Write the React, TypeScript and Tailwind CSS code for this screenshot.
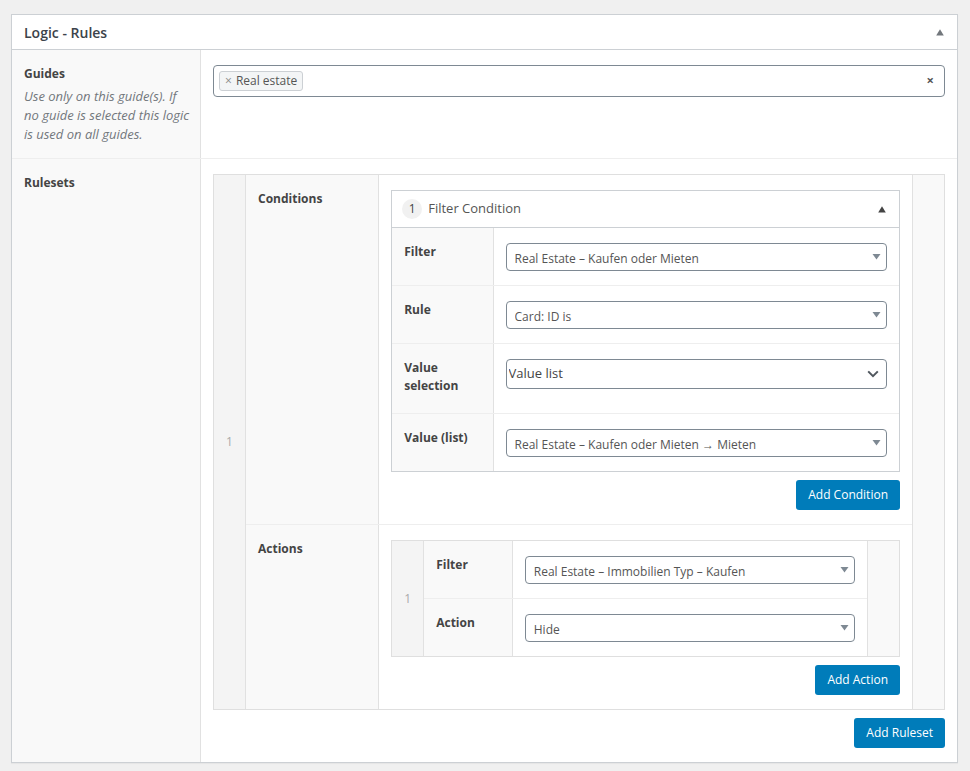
import { useState } from 'react';
import type { ReactNode } from 'react';
import { clsx } from 'clsx';

type FieldProps = {
  label: string;
  htmlFor?: string;
  description?: string;
  children: ReactNode;
};

// One settings row: grey label cell on the left, input cell on the right.
function Field({ label, htmlFor, description, children }: FieldProps) {
  const labelClass = 'mb-1 block text-[12px] leading-[18px] font-bold text-[#444]';
  return (
    <div className="flex border-t border-[#eee] first:border-t-0">
      <div className="w-1/5 shrink-0 border-r border-[#e1e1e1] bg-[#f9f9f9] pt-[15px] pr-2 pb-[14px] pl-3">
        {htmlFor ? (
          <label htmlFor={htmlFor} className={labelClass}>{label}</label>
        ) : (
          <span className={labelClass}>{label}</span>
        )}
        {description && (
          <p className="text-[13px] leading-[19px] text-[#72777c] italic">{description}</p>
        )}
      </div>
      <div className="min-w-0 flex-1 px-3 pt-[15px] pb-[14px]">{children}</div>
    </div>
  );
}

function SearchSelect({ id, value }: { id: string; value: string }) {
  return (
    <div className="relative">
      <select
        id={id}
        className="block h-7 w-full appearance-none rounded border border-[#7e8993] bg-white pt-1 pr-7 pl-2 text-[12px] text-[#555]"
      >
        <option>{value}</option>
      </select>
      <svg className="pointer-events-none absolute top-[11px] right-[6px]" width="9" height="6" viewBox="0 0 9 6">
        <path d="M0.5 0h8L4.5 5.5z" fill="#7e8993" />
      </svg>
    </div>
  );
}

function NativeSelect({ id, value }: { id: string; value: string }) {
  return (
    <div className="relative">
      <select
        id={id}
        className="block h-[30px] w-full appearance-none rounded border border-[#7e8993] bg-white pr-6 pl-[2px] text-[13px] text-[#444]"
      >
        <option>{value}</option>
      </select>
      <svg className="pointer-events-none absolute top-[11px] right-2" width="12" height="8" viewBox="0 0 12 8">
        <path d="M1.2 1.4L6 6.2l4.8-4.8" fill="none" stroke="#50575e" strokeWidth="2" />
      </svg>
    </div>
  );
}

function UpTriangle({ className }: { className?: string }) {
  return (
    <svg width="8" height="7" viewBox="0 0 8 7" className={className}>
      <path d="M4 0.3L7.8 6.5H0.2z" fill="currentColor" />
    </svg>
  );
}

// Table-like box with an order handle on the left and a tools strip on the right.
function RepeaterRow({ order, children }: { order: number; children: ReactNode }) {
  return (
    <div className="flex border border-[#dfdfdf]">
      <div className="flex w-8 shrink-0 items-center justify-center border-r border-[#e1e1e1] bg-[#f4f4f4] text-[12px] text-[#aaa]">
        {order}
      </div>
      <div className="min-w-0 flex-1">{children}</div>
      <div className="w-8 shrink-0 border-l border-[#e1e1e1] bg-[#f9f9f9]" />
    </div>
  );
}

function AddButton({ children }: { children: ReactNode }) {
  return (
    <div className="mt-2 flex justify-end">
      <button
        type="button"
        className="h-[30px] rounded-[3px] bg-[#007cba] px-3 text-[12px] text-white hover:bg-[#0071a1]"
      >
        {children}
      </button>
    </div>
  );
}

function GuidePicker() {
  const [guides, setGuides] = useState(['Real estate']);
  return (
    <div className="flex h-8 items-center rounded border border-[#7e8993] bg-white px-[5px]">
      {guides.map((guide) => (
        <span
          key={guide}
          className="flex h-5 items-center gap-1 rounded-[3px] border border-[#ccd0d4] bg-[#f3f5f6] px-[5px] text-[12px] text-[#555]"
        >
          <button
            type="button"
            aria-label={`Remove ${guide}`}
            className="text-[#888]"
            onClick={() => setGuides(guides.filter((g) => g !== guide))}
          >
            ×
          </button>
          {guide}
        </span>
      ))}
      <input id="guides" type="text" className="h-6 min-w-0 flex-1 px-1 text-[12px] outline-none" />
      <button
        type="button"
        aria-label="Clear guides"
        className="px-[5px] text-[13px] font-bold text-[#555]"
        onClick={() => setGuides([])}
      >
        ×
      </button>
    </div>
  );
}

function FilterCondition() {
  const [open, setOpen] = useState(true);
  return (
    <div className="border border-[#ccd0d4]">
      <div className={clsx('flex h-[37px] items-center pr-[13px] pl-[10px]', open && 'border-b border-[#ccd0d4]')}>
        <span className="flex size-5 items-center justify-center rounded-full bg-[#f1f1f1] text-[12px] text-[#444]">
          1
        </span>
        <span className="ml-[6px] flex-1 text-[13px] text-[#555]">Filter Condition</span>
        <button type="button" aria-label="Toggle condition" onClick={() => setOpen(!open)}>
          <UpTriangle className="text-[#444]" />
        </button>
      </div>
      {open && (
        <div>
          <Field label="Filter" htmlFor="condition-filter">
            <SearchSelect id="condition-filter" value="Real Estate – Kaufen oder Mieten" />
          </Field>
          <Field label="Rule" htmlFor="condition-rule">
            <SearchSelect id="condition-rule" value="Card: ID is" />
          </Field>
          <Field label="Value selection" htmlFor="condition-selection">
            <NativeSelect id="condition-selection" value="Value list" />
          </Field>
          <Field label="Value (list)" htmlFor="condition-value">
            <SearchSelect id="condition-value" value="Real Estate – Kaufen oder Mieten → Mieten" />
          </Field>
        </div>
      )}
    </div>
  );
}

export default function App() {
  const [open, setOpen] = useState(true);
  return (
    <main className="min-h-screen bg-[#f0f0f0] pt-[14px] pr-3 pl-[11px] font-['Open_Sans','Noto_Sans',sans-serif]">
      <section className="border border-[#ccd0d4] bg-white shadow-[0_1px_1px_rgba(0,0,0,0.04)]">
        <header className="flex h-[35px] items-center justify-between border-b border-[#ccd0d4] pr-[13px] pl-3">
          <h2 className="text-[14px] font-semibold text-[#3c434a]">Logic - Rules</h2>
          <button type="button" aria-label="Toggle panel" onClick={() => setOpen(!open)}>
            <UpTriangle className="text-[#72777c]" />
          </button>
        </header>
        {open && (
          <div>
            <Field
              label="Guides"
              htmlFor="guides"
              description="Use only on this guide(s). If no guide is selected this logic is used on all guides."
            >
              <GuidePicker />
            </Field>
            <Field label="Rulesets">
              <RepeaterRow order={1}>
                <Field label="Conditions">
                  <FilterCondition />
                  <AddButton>Add Condition</AddButton>
                </Field>
                <Field label="Actions">
                  <RepeaterRow order={1}>
                    <Field label="Filter" htmlFor="action-filter">
                      <SearchSelect id="action-filter" value="Real Estate – Immobilien Typ – Kaufen" />
                    </Field>
                    <Field label="Action" htmlFor="action-type">
                      <SearchSelect id="action-type" value="Hide" />
                    </Field>
                  </RepeaterRow>
                  <AddButton>Add Action</AddButton>
                </Field>
              </RepeaterRow>
              <AddButton>Add Ruleset</AddButton>
            </Field>
          </div>
        )}
      </section>
    </main>
  );
}
